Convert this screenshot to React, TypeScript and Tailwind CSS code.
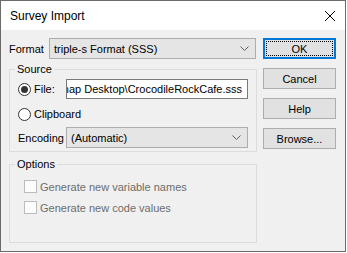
function Chevron() {
  return (
    <svg width="9" height="5" viewBox="0 0 9 5" className="shrink-0">
      <polyline points="0.5,0.5 4.5,4.5 8.5,0.5" fill="none" stroke="#606060" strokeWidth="1" />
    </svg>
  );
}

function Combo({ value, width }: { value: string; width: string }) {
  return (
    <div className={`${width} h-[21px] flex items-center justify-between bg-[#e5e5e5] border border-[#adadad] pl-[4px] pr-[6px] text-black`}>
      <span className="whitespace-nowrap">{value}</span>
      <Chevron />
    </div>
  );
}

function Radio({ checked, label }: { checked: boolean; label: string }) {
  return (
    <div className="flex items-center gap-[3px]">
      <div className="w-[13px] h-[13px] rounded-full border border-[#333333] bg-white flex items-center justify-center">
        {checked && <div className="w-[7px] h-[7px] rounded-full bg-[#333333]" />}
      </div>
      <span>{label}</span>
    </div>
  );
}

function DisabledCheck({ label }: { label: string }) {
  return (
    <div className="h-[15px] flex items-center pl-[14px] gap-[3px]">
      <div className="w-[13px] h-[13px] border border-[#bcbcbc] bg-[#fcfcfc]" />
      <span className="text-[#6d6d6d]">{label}</span>
    </div>
  );
}

function Button({ label, primary }: { label: string; primary?: boolean }) {
  if (primary) {
    return (
      <div className="w-[73px] h-[21px] border-2 border-[#0078d7] bg-[#e1e1e1] p-px">
        <div className="w-full h-full border border-dotted border-black flex items-center justify-center">
          {label}
        </div>
      </div>
    );
  }
  return (
    <div className="w-[73px] h-[21px] border border-[#adadad] bg-[#e1e1e1] flex items-center justify-center">
      {label}
    </div>
  );
}

export default function App() {
  return (
    <div className="w-[347px] h-[253px] bg-white font-['Liberation_Sans',Arial,sans-serif] text-black">
      <div className="w-[346px] h-[252px] border border-[#6b6b6b] bg-[#f0f0f0] flex flex-col">
        {/* Title bar */}
        <div className="h-[29px] bg-white flex items-center justify-between pl-[9px] pr-[10px]">
          <span className="text-[12px]">Survey Import</span>
          <svg width="10" height="10" viewBox="0 0 10 10">
            <line x1="0" y1="0" x2="10" y2="10" stroke="#000" strokeWidth="1" />
            <line x1="10" y1="0" x2="0" y2="10" stroke="#000" strokeWidth="1" />
          </svg>
        </div>

        <div className="flex pl-[8px] pt-[8px] gap-[6px] text-[11px] leading-[14px]">
          <div className="w-[248px] flex flex-col">
            <div className="h-[21px] flex items-center">
              <span className="w-[40px]">Format</span>
              <Combo value="triple-s Format (SSS)" width="w-[207px]" />
            </div>

            <fieldset className="mt-[3px] border border-[#dcdcdc] p-0 pb-[3px] m-0 min-w-0">
              <legend className="ml-[5px] px-[2px] leading-[14px]">Source</legend>
              <div className="mt-[3px] h-[20px] flex items-center pl-[8px]">
                <div className="w-[48px]">
                  <Radio checked label="File:" />
                </div>
                <div className="w-[182px] h-[20px] bg-white border border-[#7a7a7a] flex items-center pr-[5px]">
                  {/* scrolled to the end, like the native edit box */}
                  <div dir="rtl" className="w-full overflow-hidden whitespace-nowrap">
                    Snap Desktop\CrocodileRockCafe.sss
                  </div>
                </div>
              </div>
              <div className="mt-[5px] h-[20px] flex items-center pl-[8px]">
                <Radio checked={false} label="Clipboard" />
              </div>
              <div className="mt-[3px] h-[21px] flex items-center pl-[8px]">
                <span className="w-[48px]">Encoding</span>
                <Combo value="(Automatic)" width="w-[182px]" />
              </div>
            </fieldset>

            <fieldset className="mt-[5px] border border-[#dcdcdc] p-0 pb-[27px] m-0 min-w-0">
              <legend className="ml-[5px] px-[2px] leading-[14px]">Options</legend>
              <div className="mt-[8px]">
                <DisabledCheck label="Generate new variable names" />
              </div>
              <div className="mt-[6px]">
                <DisabledCheck label="Generate new code values" />
              </div>
            </fieldset>
          </div>

          <div className="w-[73px] flex flex-col gap-[9px]">
            <Button label="OK" primary />
            <Button label="Cancel" />
            <Button label="Help" />
            <Button label="Browse..." />
          </div>
        </div>
      </div>
    </div>
  );
}
